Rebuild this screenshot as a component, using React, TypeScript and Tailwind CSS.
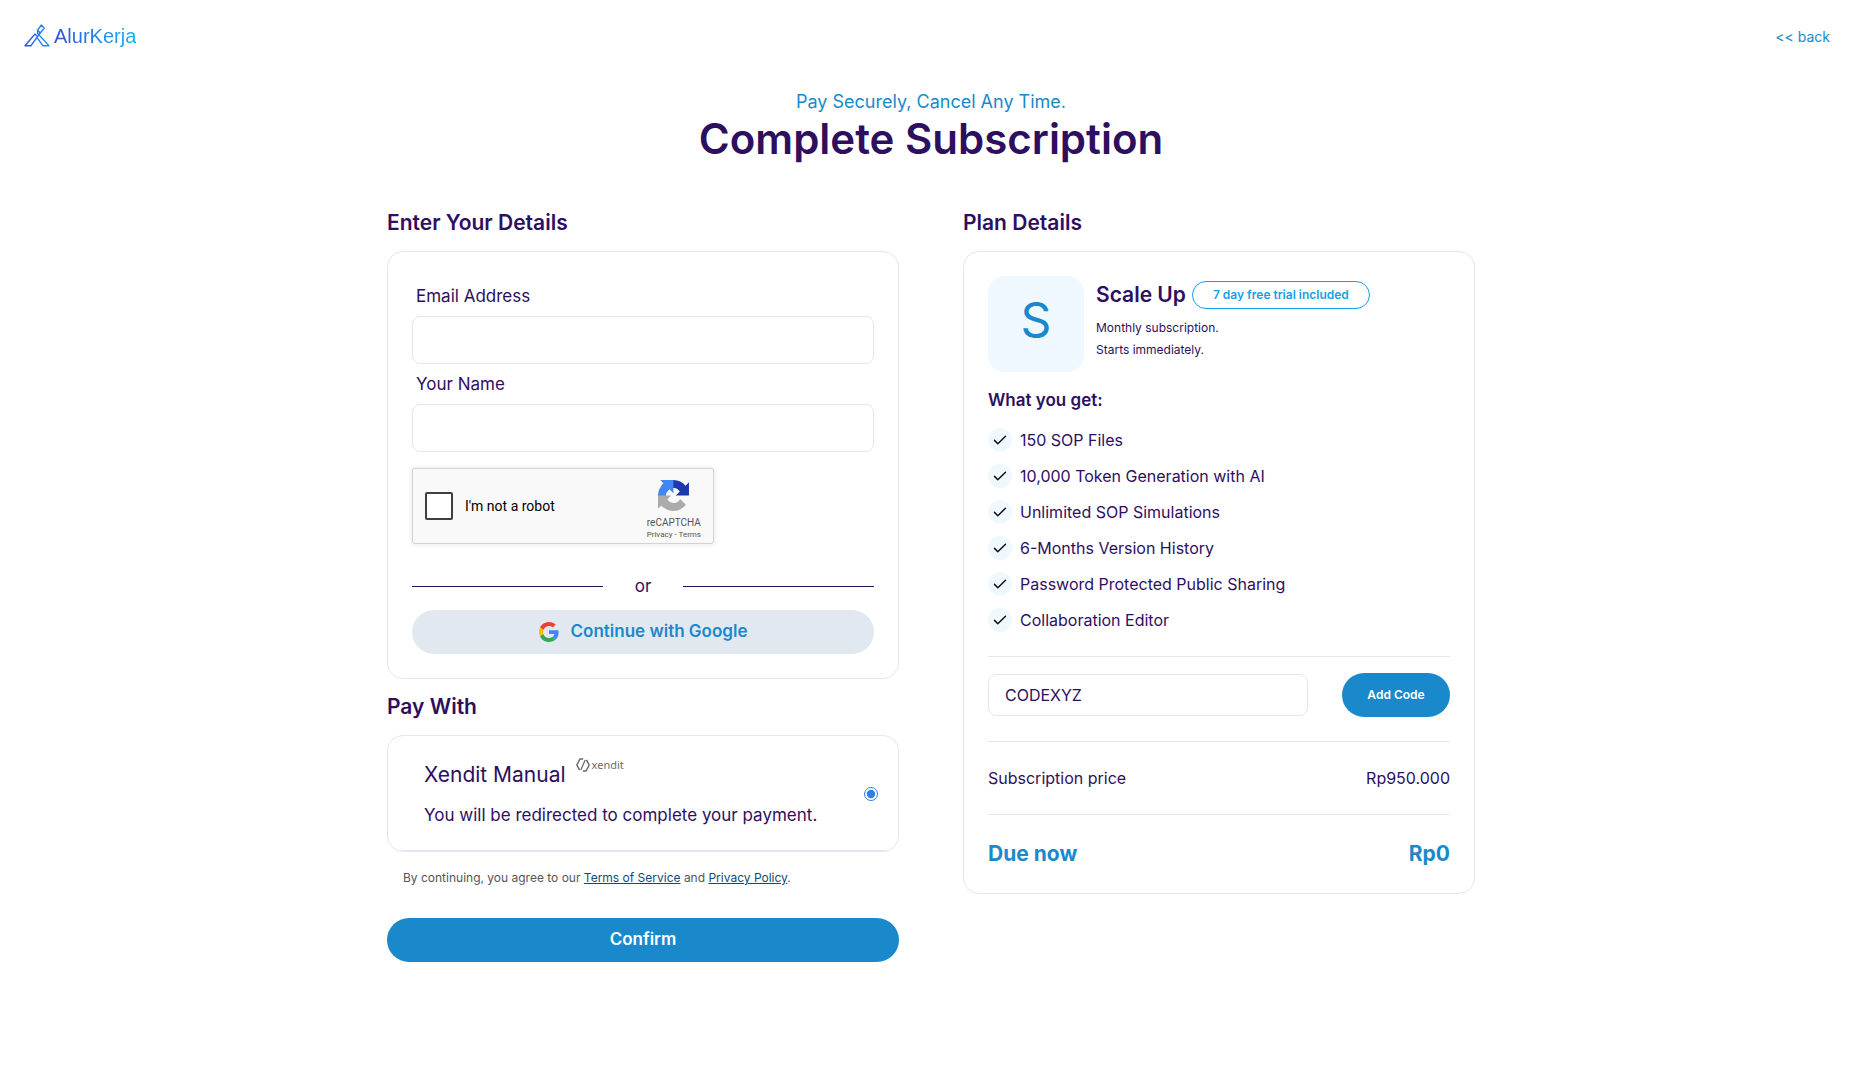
import { useState } from 'react';
import type { ReactNode } from 'react';

const FEATURES = [
  '150 SOP Files',
  '10,000 Token Generation with AI',
  'Unlimited SOP Simulations',
  '6-Months Version History',
  'Password Protected Public Sharing',
  'Collaboration Editor',
];

function Logo() {
  return (
    <a href="#home" className="flex items-center gap-1" aria-label="AlurKerja">
      <svg width="26" height="24" viewBox="0 0 26 24" fill="none" aria-hidden="true">
        <defs>
          <linearGradient id="logo-mark" x1="0" y1="0" x2="26" y2="0" gradientUnits="userSpaceOnUse">
            <stop stopColor="#2f4fd8" />
            <stop offset="1" stopColor="#1a9af5" />
          </linearGradient>
        </defs>
        <g stroke="url(#logo-mark)" strokeWidth="1.4" strokeLinejoin="round">
          <path d="M17.4 1 20.2 4.2 16.2 9 13.6 6.2Z" />
          <path d="M16.2 9 6.8 21.8H1L11 10l2.4 2.6" />
          <path d="M13.6 6.2V9.4L25 21.8h-6L13.4 14.2" />
        </g>
      </svg>
      <span className="bg-linear-to-r from-[#2f4fd8] to-[#14b0f5] bg-clip-text font-['Liberation_Sans',sans-serif] text-[20px] leading-6 text-transparent">
        AlurKerja
      </span>
    </a>
  );
}

function RecaptchaIcon() {
  return (
    <svg width="31" height="31" viewBox="0 0 64 64" aria-hidden="true">
      <path fill="#1c3aa9" d="M64 31.955l-.033-1.37V4.687l-7.16 7.16C50.948 4.674 42.033.093 32.05.093c-10.4 0-19.622 4.96-25.458 12.64l11.736 11.86a15.55 15.55 0 0 1 4.754-5.334c2.05-1.6 4.952-2.906 8.968-2.906.485 0 .86.057 1.135.163 4.976.393 9.288 3.14 11.828 7.124l-8.307 8.307L64 31.953" />
      <path fill="#4285f4" d="M31.862.094l-1.37.033H4.594l7.16 7.16C4.58 13.147 0 22.06 0 32.046c0 10.4 4.96 19.622 12.64 25.458L24.5 45.768a15.55 15.55 0 0 1-5.334-4.754c-1.6-2.05-2.906-4.952-2.906-8.968 0-.485.057-.86.163-1.135.393-4.976 3.14-9.288 7.124-11.828l8.307 8.307L31.86.095" />
      <path fill="#ababab" d="M.001 32.045l.033 1.37v25.898l7.16-7.16c5.86 7.173 14.774 11.754 24.76 11.754 10.4 0 19.622-4.96 25.458-12.64l-11.736-11.86a15.55 15.55 0 0 1-4.754 5.334c-2.05 1.6-4.952 2.906-8.968 2.906-.485 0-.86-.057-1.135-.163-4.976-.393-9.288-3.14-11.828-7.124l8.307-8.307L0 32.046" />
    </svg>
  );
}

function GoogleIcon() {
  return (
    <svg width="20" height="20" viewBox="0 0 48 48" aria-hidden="true">
      <path fill="#EA4335" d="M24 9.5c3.54 0 6.71 1.22 9.21 3.6l6.85-6.85C35.9 2.38 30.47 0 24 0 14.62 0 6.51 5.38 2.56 13.22l7.98 6.19C12.43 13.72 17.74 9.5 24 9.5z" />
      <path fill="#4285F4" d="M46.98 24.55c0-1.57-.15-3.09-.38-4.55H24v9.02h12.94c-.58 2.96-2.26 5.48-4.78 7.18l7.73 6c4.51-4.18 7.09-10.36 7.09-17.65z" />
      <path fill="#FBBC05" d="M10.53 28.59c-.48-1.45-.76-2.99-.76-4.59s.27-3.14.76-4.59l-7.98-6.19C.92 16.46 0 20.12 0 24c0 3.88.92 7.54 2.56 10.78l7.97-6.19z" />
      <path fill="#34A853" d="M24 48c6.48 0 11.93-2.13 15.89-5.81l-7.73-6c-2.15 1.45-4.92 2.3-8.16 2.3-6.26 0-11.57-4.22-13.47-9.91l-7.98 6.19C6.51 42.62 14.62 48 24 48z" />
    </svg>
  );
}

function XenditLogo() {
  return (
    <span className="flex items-center gap-0.5 text-[#6b6b6b]">
      <svg width="14" height="14" viewBox="0 0 14 14" fill="none" stroke="currentColor" strokeWidth="1.5" aria-hidden="true">
        <path d="M7.2.9H4L.8 7l2.8 5.2" />
        <path d="M9.2 2 4.8 12" strokeWidth="1.3" />
        <path d="M6.8 13.1H10L13.2 7l-2.8-5.2" />
      </svg>
      <span className="font-['Noto_Sans',sans-serif] text-[11px] leading-4">xendit</span>
    </span>
  );
}

function SectionTitle({ children }: { children: ReactNode }) {
  return <h2 className="mb-3.5 text-[21px] leading-7 font-semibold">{children}</h2>;
}

interface TextFieldProps {
  id: string;
  label: string;
  type: string;
}

function TextField({ id, label, type }: TextFieldProps) {
  return (
    <div className="pt-2">
      <label htmlFor={id} className="mb-2 block px-1 text-[17px] leading-6">
        {label}
      </label>
      <input
        id={id}
        name={id}
        type={type}
        className="block h-12 w-full rounded-lg border border-slate-200 px-4 outline-none focus:border-[#1a89cc]"
      />
    </div>
  );
}

function Recaptcha() {
  return (
    <div className="mt-4 h-[78px]">
      <div className="flex h-[76px] w-[302px] items-center rounded-[3px] border border-[#d3d3d3] bg-[#f9f9f9] px-3 font-[Roboto,sans-serif] shadow-[0_0_4px_1px_rgba(0,0,0,0.08)]">
        <input
          id="robot"
          type="checkbox"
          className="h-7 w-7 appearance-none rounded-[2px] border-2 border-[#3f3f3f] bg-white checked:bg-[#4285f4]"
        />
        <label htmlFor="robot" className="ml-3 flex-1 text-[14px] leading-4 text-black">
          I'm not a robot
        </label>
        <div className="flex flex-col items-center pt-1.5 text-[#555555]">
          <RecaptchaIcon />
          <span className="mt-1 text-[10px] leading-4">reCAPTCHA</span>
          <span className="text-[8px] leading-2">
            <a href="#recaptcha-privacy">Privacy</a> - <a href="#recaptcha-terms">Terms</a>
          </span>
        </div>
      </div>
    </div>
  );
}

function DetailsCard() {
  return (
    <div className="rounded-2xl border border-slate-200 p-6">
      <TextField id="email" label="Email Address" type="email" />
      <TextField id="name" label="Your Name" type="text" />
      <Recaptcha />
      <div className="mt-7 flex items-center gap-8 text-[17px] leading-6">
        <span className="h-px flex-1 bg-[#2e0f5f]" />
        or
        <span className="h-px flex-1 bg-[#2e0f5f]" />
      </div>
      <button
        type="button"
        className="mt-3 flex h-11 w-full items-center justify-center gap-3 rounded-full bg-slate-200 text-[17px] font-semibold text-[#1a89cc]"
      >
        <GoogleIcon />
        Continue with Google
      </button>
    </div>
  );
}

function PaymentCard() {
  return (
    <div className="overflow-hidden rounded-2xl border border-slate-200">
      <label className="flex items-center justify-between border-b border-slate-200 pt-[25px] pr-5 pb-[23px] pl-9">
        <span>
          <span className="flex gap-2.5 text-[21px] leading-7">
            Xendit Manual
            <span className="-mt-1">
              <XenditLogo />
            </span>
          </span>
          <span className="mt-3.5 block text-[17px] leading-6">You will be redirected to complete your payment.</span>
        </span>
        <input type="radio" name="payment" defaultChecked className="h-3.5 w-3.5 accent-[#2f80e4]" />
      </label>
    </div>
  );
}

function PlanCard() {
  const [code, setCode] = useState('CODEXYZ');

  return (
    <div className="rounded-2xl border border-slate-200 p-6">
      <div className="flex gap-3">
        <div className="flex h-24 w-24 items-center justify-center rounded-2xl bg-[#f0f8ff] pb-2 text-[48px] text-[#1a89cc]">S</div>
        <div className="pt-[5px]">
          <div className="mb-2 flex items-center gap-1.5">
            <h3 className="text-[21px] leading-7 font-semibold">Scale Up</h3>
            <span className="rounded-full border border-[#149fe6] px-5 text-[12px] leading-[26px] font-semibold text-[#149fe6]">
              7 day free trial included
            </span>
          </div>
          <p className="text-[12px] leading-[22px]">Monthly subscription.</p>
          <p className="text-[12px] leading-[22px]">Starts immediately.</p>
        </div>
      </div>

      <h4 className="mt-4 text-[17px] leading-6 font-semibold">What you get:</h4>
      <ul className="mt-4 mb-6 space-y-3">
        {FEATURES.map((feature) => (
          <li key={feature} className="flex items-center gap-2 leading-6">
            <span className="flex h-6 w-6 items-center justify-center rounded-full bg-[#f0f8ff]">
              <svg width="14" height="10" viewBox="0 0 14 10" fill="none" stroke="#111111" strokeWidth="1.5" strokeLinecap="round" strokeLinejoin="round" aria-hidden="true">
                <path d="M1.5 5.4 4.8 8.7 12.5 1.2" />
              </svg>
            </span>
            {feature}
          </li>
        ))}
      </ul>

      <div className="flex items-center justify-between gap-8 border-t border-slate-200 pt-4 pb-6">
        <input
          type="text"
          aria-label="Promo code"
          value={code}
          onChange={(e) => setCode(e.target.value)}
          className="h-[42px] w-80 min-w-0 rounded-lg border border-slate-200 px-4 outline-none focus:border-[#1a89cc]"
        />
        <button type="button" className="h-11 w-[108px] shrink-0 rounded-full bg-[#1a89cc] text-[12px] font-semibold text-white">
          Add Code
        </button>
      </div>

      <div className="flex justify-between border-t border-slate-200 py-6 leading-6">
        <span>Subscription price</span>
        <span>Rp950.000</span>
      </div>
      <div className="flex justify-between border-t border-slate-200 pt-6 text-[21px] leading-[30px] font-bold text-[#1a89cc]">
        <span>Due now</span>
        <span>Rp0</span>
      </div>
    </div>
  );
}

export default function App() {
  return (
    <div className="min-h-screen bg-white font-[Inter,sans-serif] text-[16px] text-[#2e0f5f]">
      <header className="flex h-[72px] items-center justify-between pr-8 pl-6">
        <Logo />
        <a href="#back" className="text-[14px] text-[#1a89cc]">
          &lt;&lt; back
        </a>
      </header>

      <main className="mx-auto max-w-[1088px] pt-4 pb-12">
        <p className="text-center text-[18px] leading-7 text-[#1a89cc]">Pay Securely, Cancel Any Time.</p>
        <h1 className="text-center text-[42px] leading-[46px] font-semibold">Complete Subscription</h1>

        <div className="mt-[47px] grid items-start gap-16 md:grid-cols-2">
          <form onSubmit={(e) => e.preventDefault()}>
            <SectionTitle>Enter Your Details</SectionTitle>
            <DetailsCard />
            <div className="mt-3.5">
              <SectionTitle>Pay With</SectionTitle>
              <PaymentCard />
            </div>
            <p className="mt-4 px-4 text-[12px] leading-5 text-[#555555]">
              By continuing, you agree to our{' '}
              <a href="#terms" className="text-[#0f4c75] underline">
                Terms of Service
              </a>{' '}
              and{' '}
              <a href="#privacy" className="text-[#0f4c75] underline">
                Privacy Policy
              </a>
              .
            </p>
            <button type="submit" className="mt-[30px] h-11 w-full rounded-full bg-[#1a89cc] text-[17px] font-semibold text-white">
              Confirm
            </button>
          </form>

          <section>
            <SectionTitle>Plan Details</SectionTitle>
            <PlanCard />
          </section>
        </div>
      </main>
    </div>
  );
}
